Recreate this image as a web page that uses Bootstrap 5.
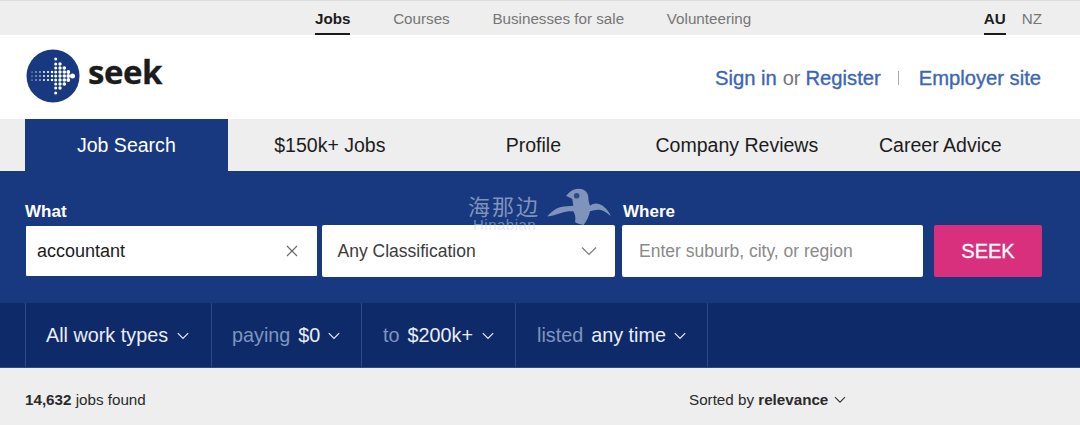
<!DOCTYPE html>
<html lang="en"><head><meta charset="utf-8"><title>SEEK</title>
<link href="https://cdn.jsdelivr.net/npm/bootstrap@5.3.0/dist/css/bootstrap.min.css" rel="stylesheet">
<style>
html,body{height:425px;overflow:hidden}
body{font-family:"Liberation Sans",Arial,sans-serif;background:#eee;color:#1c1c1c;position:relative}
.top-strip{height:35px;background:#eee;border-top:1px solid #ddd;padding:0 38px 0 0}
.top-links{margin-left:315px;gap:42.7px;height:34px}
.top-item{font-size:15.2px;color:#767676;line-height:35px;height:34px;text-decoration:none;display:block}
.top-item.on{color:#1c1c1c;font-weight:700;border-bottom:2px solid #1c1c1c}
.locale{gap:16px}
.brand-band{height:84px;background:#fff;padding:0 39px 0 26px}
.brand-left{padding-bottom:2px}
.seek-word{font-family:"Open Sans","Liberation Sans",sans-serif;font-weight:700;font-size:33px;letter-spacing:-.5px;-webkit-text-stroke:.3px #1c1c1c;color:#1c1c1c;line-height:1;margin-left:8px;margin-top:-9px}
.acct{font-size:20px;color:#767676;margin-top:2px}
.acct a{color:#3a66b5;text-decoration:none;font-size:20.2px;-webkit-text-stroke:.35px #3a66b5}
.acct-or{margin:0 5px 0 6px}
.acct-sep{width:1px;height:14px;background:#aaa;margin:0 20px 0 17px}
.tab-row{height:52px;background:#eee;padding-left:24.6px}
.tab-cell{width:203.5px;height:52px;line-height:52px;text-align:center;font-size:19.55px;color:#1c1c1c;text-decoration:none;display:block}
.tab-cell.on{background:#18397f;color:#fff}
.search-panel{height:132px;background:#18397f;padding:30px 38px 0 25px}
.fld-label{font-size:17px;font-weight:700;color:#fff;line-height:22px;height:24px}
.fld-what{width:293px;margin-right:4px}
.fld-class{width:293px;margin-right:7px;padding-top:24px}
.fld-where{width:301px;margin-right:11px}
.fld-where .fld-label{padding-left:1px}
.fld-box{height:52px;background:#fff;border-radius:2px;font-size:17.5px;line-height:54px;color:#3c3c3c;padding:0 12px;width:100%}
.fld-what .fld-box{border:1px solid #18397f;color:#1c1c1c;font-size:18px;padding:0 11px}
.fld-x{margin-right:7px}
.fld-class .fld-box{padding:0 18px 0 15.5px}
.fld-where .fld-box{padding:0 17px;color:#8a8a8a}
.seek-go{width:108px;height:52px;margin-top:24px;background:#d9307e;border:0;border-radius:2px;color:#fff;font-size:20px;padding:0;-webkit-text-stroke:.3px #fff}
.seek-go:hover{background:#d9307e;color:#fff}
.filter-bar{height:65px;background:#0f2a68;padding-left:25px;border-bottom:1px solid #2b4a86}
.filter-cell{height:64px;padding-top:1px;border-left:1px solid #2d4a85;padding-left:20px;padding-right:21px;font-size:19.8px;color:#e9eef7}
.fc-a{width:186px;padding-right:22px}
.fc-b{width:150px}
.fc-c{width:154px;padding-left:21px}
.fc-d{width:193px;padding-left:21px;border-right:1px solid #2d4a85}
.dim{color:#7f95bf}
.result-bar{height:57px;padding:8px 0 0 25px;font-size:15.2px;color:#2a2a2a}
.count-box{width:92px;white-space:nowrap}
.sort-box{margin-left:572px;gap:6px}
.mark-layer{position:absolute;left:466px;top:186px;width:150px;height:50px;pointer-events:none;overflow:hidden}
.mark-cn{position:absolute;left:2px;top:8px;font-family:"Noto Sans CJK SC",sans-serif;font-size:22px;letter-spacing:2px;line-height:22px;color:#7f93bb}
.mark-en{position:absolute;left:7px;top:31px;font-size:15px;letter-spacing:.5px;line-height:16px;color:rgba(200,210,232,.5)}
.mark-bird{position:absolute;left:0;top:0}
</style></head><body>
<div class="top-strip d-flex align-items-start justify-content-between">
 <div class="top-links d-flex">
  <a class="top-item on" href="#">Jobs</a><a class="top-item" href="#">Courses</a><a class="top-item" href="#">Businesses for sale</a><a class="top-item" href="#">Volunteering</a>
 </div>
 <div class="locale d-flex"><a class="top-item on" href="#">AU</a><a class="top-item" href="#">NZ</a></div>
</div>
<div class="brand-band d-flex align-items-center justify-content-between">
 <div class="brand-left d-flex align-items-center">
  <svg width="54" height="54" viewBox="0 0 54 54" aria-hidden="true">
   <circle cx="27" cy="27" r="26.5" fill="#18397f"/>
   <g fill="#fff" id="dots"></g>
  </svg>
  <span class="seek-word">seek</span>
 </div>
 <div class="acct d-flex align-items-center"><a href="#">Sign in</a><span class="acct-or">or</span><a href="#">Register</a><span class="acct-sep"></span><a href="#">Employer site</a></div>
</div>
<div class="tab-row d-flex">
 <a class="tab-cell on" href="#">Job Search</a><a class="tab-cell" href="#">$150k+ Jobs</a><a class="tab-cell" href="#">Profile</a><a class="tab-cell" href="#">Company Reviews</a><a class="tab-cell" href="#">Career Advice</a>
</div>
<div class="search-panel d-flex">
 <div class="fld-what"><div class="fld-label">What</div><div class="fld-box d-flex align-items-center justify-content-between"><span>accountant</span>
  <svg width="14" height="14" viewBox="0 0 14 14" class="fld-x"><path d="M2 2l10 10M12 2L2 12" stroke="#6b6b6b" stroke-width="1.2" fill="none"/></svg></div></div>
 <div class="fld-class"><div class="fld-box d-flex align-items-center justify-content-between"><span>Any Classification</span>
  <svg width="16" height="10" viewBox="0 0 16 10"><path d="M1 1.5l7 7 7-7" stroke="#777" stroke-width="1.1" fill="none"/></svg></div></div>
 <div class="fld-where"><div class="fld-label">Where</div><div class="fld-box d-flex align-items-center">Enter suburb, city, or region</div></div>
 <button class="btn seek-go" type="button">SEEK</button>
</div>
<div class="filter-bar d-flex">
 <div class="filter-cell fc-a d-flex align-items-center justify-content-between"><span>All work types</span><svg width="12" height="8" viewBox="0 0 12 8"><path d="M.8 1.2L6 6.4l5.2-5.2" stroke="#e9eef7" stroke-width="1.2" fill="none"/></svg></div>
 <div class="filter-cell fc-b d-flex align-items-center justify-content-between"><span><span class="dim me-2">paying</span>$0</span><svg width="12" height="8" viewBox="0 0 12 8"><path d="M.8 1.2L6 6.4l5.2-5.2" stroke="#e9eef7" stroke-width="1.2" fill="none"/></svg></div>
 <div class="filter-cell fc-c d-flex align-items-center justify-content-between"><span><span class="dim me-2">to</span>$200k+</span><svg width="12" height="8" viewBox="0 0 12 8"><path d="M.8 1.2L6 6.4l5.2-5.2" stroke="#e9eef7" stroke-width="1.2" fill="none"/></svg></div>
 <div class="filter-cell fc-d d-flex align-items-center justify-content-between"><span><span class="dim me-2">listed</span>any time</span><svg width="12" height="8" viewBox="0 0 12 8"><path d="M.8 1.2L6 6.4l5.2-5.2" stroke="#e9eef7" stroke-width="1.2" fill="none"/></svg></div>
</div>
<div class="result-bar d-flex align-items-center">
 <div class="count-box"><strong>14,632</strong> jobs found</div>
 <div class="sort-box d-flex align-items-center"><span>Sorted by <strong>relevance</strong></span><svg width="12" height="8" viewBox="0 0 12 8"><path d="M1 1.2l5 5 5-5" stroke="#333" stroke-width="1.1" fill="none"/></svg></div>
</div>
<div class="mark-layer">
 <span class="mark-cn">海那边</span>
 <span class="mark-en">Hinabian</span>
 <svg width="150" height="50" viewBox="0 0 150 50" class="mark-bird"><path d="M100 9.7C103 7 106 2.7 112.3 2.7C118 2.7 122.3 6 122.3 11C122.3 14 123 17 124 19.7C127 17.5 130 17 133 18C138 19.5 143 25 144.7 30C140 26 137 24 133 23.7C130 23.5 127 24.5 124 25.3C123 30 121 35 117.5 39C113 38 110 37 109 36C110 32 109 28 107.3 25.3C103 25 99 25.5 95 27C91 28.5 85 30 81.3 30.5C85 26 90 22 95 21C99 20 103 20 107.3 19.7C107 17 106.5 15 106.3 13C104 11.5 102 10.5 100 9.7Z" fill="#7f93bb"/><circle cx="110.7" cy="9.7" r="2.8" fill="#2d4a8a"/></svg>
</div>
<script>
var s='';
function d(x,y,r){s+='<circle cx="'+x+'" cy="'+y+'" r="'+r+'"/>';}
[23,27,31].forEach(function(y){[6,10,14,18,22,26].forEach(function(x,i){d(x,y,.55+i*.14);});});
[10,15,19,23,27,31,35,39,44].forEach(function(y){d(29.7,y,1.5);});
[15,19,23,27,31,35,39].forEach(function(y){d(34,y,1.7);});
[19,23,27,31,35].forEach(function(y){d(38.3,y,1.8);});
[23,31].forEach(function(y){d(42.3,y,1.9);});
d(42.3,27,1.9);d(46.5,27,2.5);
document.getElementById('dots').innerHTML=s;
</script>
</body></html>
